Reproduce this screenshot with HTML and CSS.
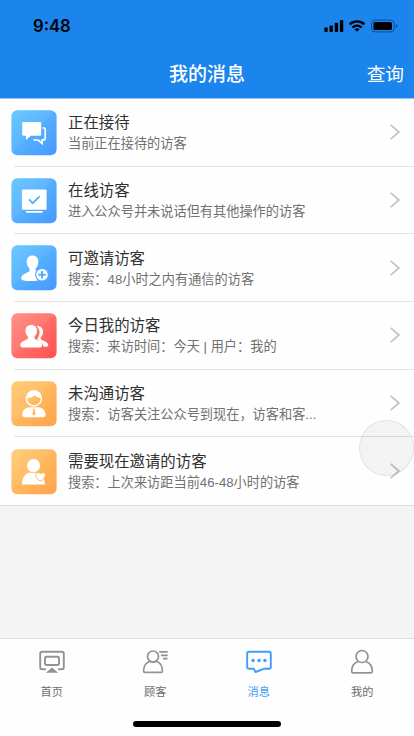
FILE: index.html
```html
<!DOCTYPE html>
<html lang="zh-CN">
<head>
<meta charset="utf-8">
<meta name="viewport" content="width=device-width, initial-scale=1">
<title>我的消息</title>
<link rel="stylesheet" href="styles.css">
</head>
<body>
<div class="app">
  <header class="header">
    <div class="status">
      <span class="time">9:48</span>
      <svg class="signals" width="76" height="16" viewBox="0 0 76 16">
        <g fill="#000">
          <rect x="0.3" y="9.5" width="3.4" height="4.5" rx="1"/>
          <rect x="5.5" y="7.5" width="3.4" height="6.5" rx="1"/>
          <rect x="10.7" y="4.8" width="3.4" height="9.2" rx="1"/>
          <rect x="15.9" y="2" width="3.4" height="12" rx="1"/>
          <path d="M33 13.8l-2.5-2.5a3.7 3.7 0 0 1 5 0z"/>
          <rect x="49.5" y="4" width="18.5" height="8" rx="1.6"/>
        </g>
        <g fill="none" stroke="#000" stroke-width="2.2">
          <path d="M25.6 6.4a10.6 10.6 0 0 1 14.8 0"/>
          <path d="M28.4 9.5a6.7 6.7 0 0 1 9.2 0"/>
        </g>
        <rect x="47.6" y="2.1" width="22.5" height="11.8" rx="3.4" fill="none" stroke="#0e4e91"/>
        <path d="M71.8 6v4q1.7-.7 1.7-2t-1.7-2z" fill="#0e4e91"/>
      </svg>
    </div>
    <div class="nav">
      <h1 class="nav-title">我的消息</h1>
      <span class="nav-action">查询</span>
    </div>
  </header>

  <main class="main">
    <ul class="list">
      <li class="row">
        <svg class="icon" viewBox="0 0 46 46">
          <defs>
            <linearGradient id="blue" x2="1" y2="1"><stop stop-color="#62c6ff"/><stop offset="1" stop-color="#4697ff"/></linearGradient>
            <linearGradient id="red" x2="1" y2="1"><stop stop-color="#ff8b80"/><stop offset="1" stop-color="#ff514f"/></linearGradient>
            <linearGradient id="orange" x2="1" y2="1"><stop stop-color="#ffcb70"/><stop offset="1" stop-color="#ffa34b"/></linearGradient>
          </defs>
          <rect x=".4" y=".3" width="45.200" height="45" rx="6" fill="url(#blue)"/>
          <path class="facet" d="M6.400.3H45L.4 43V6.300q0-6 6-6z"/>
          <path d="M12.500 12h16.400q1.300 0 1.300 1.300v11.200q0 1.300-1.300 1.300h-9.200L15 30v-4.200h-2.500q-1.300 0-1.300-1.300V13.300q0-1.300 1.300-1.300z" fill="#fff"/>
          <path d="M31.500 18h1.700q1 0 1 1v9.800q0 1-1 1h-2v3.700l-4.200-3.500h-4.500" fill="none" stroke="#fff" stroke-width="1.700"/>
        </svg>
        <div class="text"><h2 class="title">正在接待</h2><p class="sub">当前正在接待的访客</p></div>
        <svg class="chevron" viewBox="0 0 10 16"><path d="M.7.800 8.900 8 .7 15.200"/></svg>
      </li>
      <li class="row">
        <svg class="icon" viewBox="0 0 46 46">
          <rect x=".4" y=".3" width="45.200" height="45" rx="6" fill="url(#blue)"/>
          <path class="facet" d="M6.400.3H45L.4 43V6.300q0-6 6-6z"/>
          <rect x="10.900" y="11.600" width="24.700" height="20.200" rx="1" fill="#fff"/>
          <path d="M15.800 33.900h15" stroke="#fff" stroke-width="1.900" stroke-linecap="round"/>
          <path d="m18 21.300 3.700 3.900 7-6.800" fill="none" stroke="#55b0ff" stroke-width="1.900"/>
        </svg>
        <div class="text"><h2 class="title">在线访客</h2><p class="sub">进入公众号并未说话但有其他操作的访客</p></div>
        <svg class="chevron" viewBox="0 0 10 16"><path d="M.7.800 8.900 8 .7 15.200"/></svg>
      </li>
      <li class="row">
        <svg class="icon" viewBox="0 0 46 46">
          <rect x=".4" y=".3" width="45.200" height="45" rx="6" fill="url(#blue)"/>
          <path class="facet" d="M6.400.3H45L.4 43V6.300q0-6 6-6z"/>
          <path d="M21.500 10.400c-3.800 0-5.800 2.600-5.800 6.300 0 2.900 1 5.200 2.800 6.600v2.600c-1.200 2-8.300 2.600-8.300 7.500 0 1.800 4 2.700 9 2.700 3 0 6-.2 8.200-.9l-1-9.200-1.700-.3v-2.400c1.700-1.400 2.600-3.700 2.600-6.600 0-3.700-2.100-6.300-5.800-6.300z" fill="#fff"/>
          <circle cx="31" cy="29.700" r="6.400" fill="#fff" stroke="#55abff" stroke-width="1.200"/>
          <path d="M27.300 29.700h7.400M31 26v7.400" stroke="#55abff" stroke-width="1.900"/>
        </svg>
        <div class="text"><h2 class="title">可邀请访客</h2><p class="sub">搜索：48小时之内有通信的访客</p></div>
        <svg class="chevron" viewBox="0 0 10 16"><path d="M.7.800 8.900 8 .7 15.200"/></svg>
      </li>
      <li class="row">
        <svg class="icon" viewBox="0 0 46 46">
          <rect x=".4" y=".3" width="45.200" height="45" rx="6" fill="url(#red)"/>
          <path class="facet" d="M6.400.3H45L.4 43V6.300q0-6 6-6z"/>
          <path d="M25.500 13c4-.2 6.500 2 6.500 5.700 0 2.500-.9 4.300-2.200 5.500v1.900c1.500 2 7.500 2.800 7.500 6 0 1.200-.9 1.700-2.100 1.700h-2.600c-.4-3.700-3.400-5.200-6.100-6.600v-2c2.800-3.200 3-9.200-1-12.200z" fill="#fff"/>
          <path d="M20.200 12c-3.700 0-5.700 2.300-5.700 5.700 0 2.500.9 4.400 2.400 5.700v2.200C15.300 27.700 9.200 28.200 9.200 32.200q0 2.400 2.500 2.400h17.200q2.400 0 2.400-2.400c0-4-6.100-4.500-7.700-6.600v-2.200c1.500-1.300 2.400-3.200 2.400-5.700 0-3.400-2.100-5.700-5.800-5.700z" fill="#fff"/>
        </svg>
        <div class="text"><h2 class="title">今日我的访客</h2><p class="sub">搜索：来访时间：今天 | 用户：我的</p></div>
        <svg class="chevron" viewBox="0 0 10 16"><path d="M.7.800 8.900 8 .7 15.200"/></svg>
      </li>
      <li class="row">
        <svg class="icon" viewBox="0 0 46 46">
          <rect x=".4" y=".3" width="45.200" height="45" rx="6" fill="url(#orange)"/>
          <path class="facet" d="M6.400.3H45L.4 43V6.300q0-6 6-6z"/>
          <circle cx="22.900" cy="17.500" r="7.500" fill="none" stroke="#fff" stroke-width="1.500"/>
          <path d="M15.500 17.200c3.300-.2 6.300-1 8.300-3 1.400 1.600 3.600 2.500 6.500 3 .2-4.500-2.800-7.700-7.400-7.700s-7.400 3.200-7.400 7.700z" fill="#fff"/>
          <path d="M18.800 26.200H27c4.500 0 7.500 3.500 7.500 7.300 0 1.800-.8 2.700-2.300 2.700H13.600c-1.500 0-2.300-.9-2.300-2.700 0-3.800 3-7.300 7.500-7.300z" fill="#fff"/>
          <path d="M21.600 27.700h2.600l-.5 1.800.9 3.500-1.700 1.500-1.700-1.500.9-3.500z" fill="#ffb85d"/>
        </svg>
        <div class="text"><h2 class="title">未沟通访客</h2><p class="sub">搜索：访客关注公众号到现在，访客和客...</p></div>
        <svg class="chevron" viewBox="0 0 10 16"><path d="M.7.800 8.900 8 .7 15.200"/></svg>
      </li>
      <li class="row">
        <svg class="icon" viewBox="0 0 46 46">
          <rect x=".4" y=".3" width="45.200" height="45" rx="6" fill="url(#orange)"/>
          <path class="facet" d="M6.400.3H45L.4 43V6.300q0-6 6-6z"/>
          <circle cx="22.500" cy="16.700" r="6.600" fill="#fff"/>
          <path d="M17.500 23.800h10c3.800 1.500 6.300 5.700 6.300 11.700H11c0-6 2.700-10.200 6.500-11.700z" fill="#fff"/>
          <path d="M29.500 32.200c-8.200-4.900-4.500-10.900 0-7.600 4.500-3.300 8.200 2.700 0 7.600z" fill="#fff" stroke="#ffb55a" stroke-width="1"/>
        </svg>
        <div class="text"><h2 class="title">需要现在邀请的访客</h2><p class="sub">搜索：上次来访距当前46-48小时的访客</p></div>
        <svg class="chevron" viewBox="0 0 10 16"><path d="M.7.800 8.900 8 .7 15.200"/></svg>
      </li>
    </ul>
    <span class="touch"></span>
  </main>

  <footer class="footer">
    <nav class="tabs">
      <div class="tab">
        <svg viewBox="0 0 28 26"><g fill="none" stroke="currentColor" stroke-width="1.900"><path d="M7.800 21.200H4.200q-2 0-2-2V5.700q0-2 2-2h19.600q2 0 2 2v13.500q0 2-2 2h-3.600"/><rect x="7" y="8.700" width="14" height="8.300" rx="1.800"/></g><path d="m14 19.500 6.200 5.200H7.800z" fill="currentColor"/></svg>
        <span>首页</span>
      </div>
      <div class="tab">
        <svg viewBox="0 0 28 26"><g fill="none" stroke="currentColor" stroke-width="1.700"><circle cx="12" cy="8.500" r="5.500"/><path d="M8.500 13.200C4.600 14.800 2.600 18.700 2.600 23q0 1.400 1.200 1.400h16.500q1.200 0 1.200-1.400c0-4.300-2-8.200-5.900-9.800M8.500 13.200q3.500 1.500 7.100 0"/><path d="M18.200 3.900h8.500M20 7.300h6.700M22 10.700h4.500"/></g></svg>
        <span>顾客</span>
      </div>
      <div class="tab active">
        <svg viewBox="0 0 28 26"><path d="M4 3.700h20q1.800 0 1.800 1.800V19q0 1.800-1.800 1.800h-5.200l-8.300 3.200-1.600-3.200H4q-1.800 0-1.800-1.800V5.500q0-1.800 1.800-1.800z" fill="none" stroke="currentColor" stroke-width="1.900" stroke-linejoin="round"/><g fill="currentColor"><circle cx="8.100" cy="12.500" r="1.700"/><circle cx="14" cy="12.500" r="1.700"/><circle cx="19.900" cy="12.500" r="1.700"/></g></svg>
        <span>消息</span>
      </div>
      <div class="tab">
        <svg viewBox="0 0 28 26"><g fill="none" stroke="currentColor" stroke-width="1.700"><circle cx="14" cy="8.500" r="6"/><path d="M10.300 13.500C6 15 3.700 19 3.700 23.200q0 1.700 1.500 1.700h17.600q1.500 0 1.500-1.700c0-4.200-2.300-8.200-6.600-9.700"/></g></svg>
        <span>我的</span>
      </div>
    </nav>
    <div class="home-bar"></div>
  </footer>
</div>
</body>
</html>
```
FILE: styles.css
```css
* { box-sizing: border-box; }

body {
  margin: 0;
  background: #f4f4f4;
  font-family: "Liberation Sans", "Noto Sans CJK SC", sans-serif;
}

h1, h2, p, ul {
  margin: 0;
  padding: 0;
  font-weight: 400;
}

.app {
  display: flex;
  flex-direction: column;
  height: 736px;
  overflow: hidden;
}

.header {
  height: 98px;
  flex: none;
  background: #1b84ed;
}

.status {
  display: flex;
  justify-content: space-between;
  align-items: center;
  height: 50px;
  padding: 2px 14px 0 33px;
}

.time {
  font: 600 16.700px/20px Inter, sans-serif;
  color: #000;
}

.nav {
  display: grid;
  grid-template-columns: 1fr auto 1fr;
  align-items: center;
  height: 48px;
  padding: 2px 10px 0;
  color: #fff;
}

.nav-title {
  grid-column: 2;
  font-size: 19px;
  font-weight: 500;
  line-height: 28px;
}

.nav-action {
  justify-self: end;
  font-size: 18.700px;
  line-height: 28px;
}

.main {
  position: relative;
  flex: 1;
  background: #f4f4f4;
}

.list {
  list-style: none;
  background: #fefefe;
  border-top: 1px solid #93c4fa;
  border-bottom: 1px solid #dcdcdc;
}

.row {
  display: flex;
  align-items: center;
  height: 67.700px;
  margin-left: 13.500px;
  padding-right: 14px;
  border-bottom: 1px solid #e4e4e4;
}

.row:last-child { border-bottom: 0; }

.icon {
  flex: none;
  width: 46px;
  height: 46px;
  margin-top: 1.500px;
  margin-left: -2.500px;
}

.facet { fill: #fff; fill-opacity: .06; }

.text {
  flex: 1;
  margin-left: 11px;
  padding-top: 2px;
  white-space: nowrap;
}

.title {
  font-size: 15.400px;
  line-height: 22px;
  color: #303030;
}

.sub {
  font-size: 13.200px;
  line-height: 20px;
  color: #717171;
}

.chevron {
  flex: none;
  width: 10px;
  height: 16px;
  fill: none;
  stroke: #c4c4c4;
  stroke-width: 1.700;
}

.touch {
  position: absolute;
  top: 322px;
  left: 358.500px;
  width: 55.500px;
  height: 55.500px;
  border: 1px solid rgba(0, 0, 0, .07);
  border-radius: 50%;
  background: rgba(0, 0, 0, .045);
}

.footer {
  flex: none;
  height: 98px;
  background: #fefefe;
  border-top: 1px solid #dedede;
}

.tabs {
  display: grid;
  grid-template-columns: repeat(4, 1fr);
  height: 82px;
}

.tab {
  display: flex;
  flex-direction: column;
  align-items: center;
  padding-top: 9px;
  font-size: 11.200px;
  line-height: 16px;
  color: #6d6d6d;
}

.tab svg {
  width: 28px;
  height: 26px;
  margin-bottom: 10px;
  color: #929292;
}

.tab.active, .tab.active svg { color: #409cff; }

.home-bar {
  width: 148px;
  height: 6px;
  margin: 0 auto;
  border-radius: 3px;
  background: #000;
}
```
